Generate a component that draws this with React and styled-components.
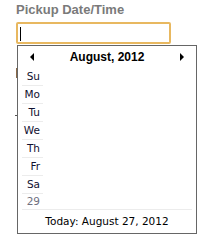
import React from "react";
import styled, { createGlobalStyle } from "styled-components";

const GlobalStyle = createGlobalStyle`
  body {
    margin: 0;
    background: #ffffff;
    font-family: "DejaVu Sans", Verdana, sans-serif;
  }
`;

const days = ["Su", "Mo", "Tu", "We", "Th", "Fr", "Sa"];

export default function App() {
  return (
    <>
      <GlobalStyle />
      <Page>
        <Label>Pickup Date/Time</Label>
        <Field>
          <FakeInput>
            <Caret />
          </FakeInput>

          <Popup>
            <Header>
              <Arrow dir="left" />
              <Title>August, 2012</Title>
              <Arrow dir="right" />
            </Header>
            <Grid>
              {days.map((d) => (
                <DayCell key={d}>{d}</DayCell>
              ))}
              <DayCell muted>29</DayCell>
            </Grid>
            <Footer>Today: August 27, 2012</Footer>
          </Popup>
        </Field>

        <HiddenLabel>
          <Stem />
        </HiddenLabel>
        <HiddenDash />
      </Page>
    </>
  );
}

const Page = styled.div`
  padding: 2px 0 0 16px;
  width: 216px;
  height: 249px;
  box-sizing: border-box;
  overflow: hidden;
`;

const Label = styled.div`
  font-family: "Liberation Sans", Arial, sans-serif;
  font-weight: bold;
  font-size: 13px;
  line-height: 16px;
  color: #7a7a7a;
`;

const Field = styled.div`
  position: relative;
  margin-top: 4px;
  z-index: 2;
`;

const FakeInput = styled.div`
  width: 155px;
  height: 22px;
  box-sizing: border-box;
  border: 2px solid #e8b860;
  border-radius: 2px;
  padding: 3px 0 0 2px;
`;

const Caret = styled.div`
  width: 1px;
  height: 14px;
  background: #000;
`;

const Popup = styled.div`
  position: absolute;
  top: 23px;
  left: 1px;
  width: 180px;
  height: 189px;
  box-sizing: border-box;
  border: 1px solid #666666;
  background: #ffffff;
  padding: 0 4px;
`;

const Header = styled.div`
  display: flex;
  align-items: center;
  justify-content: space-between;
  height: 22px;
  padding: 0 8px 0 8px;
`;

const Title = styled.div`
  font-family: "Liberation Sans", Arial, sans-serif;
  font-weight: bold;
  font-size: 12px;
  color: #000;
`;

const Arrow = styled.span`
  width: 0;
  height: 0;
  border-top: 4px solid transparent;
  border-bottom: 4px solid transparent;
  ${(p) =>
    p.dir === "left"
      ? "border-right: 4px solid #000;"
      : "border-left: 4px solid #000;"}
`;

const Grid = styled.div`
  display: flex;
  flex-direction: column;
  border-bottom: 1px solid #ececec;
`;

const DayCell = styled.div`
  width: 21px;
  height: ${(p) => (p.muted ? "15px" : "18px")};
  box-sizing: border-box;
  padding-right: 3px;
  text-align: right;
  font-size: 10.5px;
  line-height: ${(p) => (p.muted ? "15px" : "17px")};
  color: ${(p) => (p.muted ? "#707080" : "#101030")};
  border-bottom: ${(p) => (p.muted ? "none" : "1px solid #ececec")};
`;

const Footer = styled.div`
  text-align: center;
  font-size: 10.5px;
  line-height: 22px;
  color: #000;
`;

const HiddenLabel = styled.div`
  margin-top: 24px;
  width: 2px;
  height: 10px;
  overflow: hidden;
`;

const Stem = styled.div`
  width: 1px;
  height: 10px;
  background: #8a6a4a;
`;

const HiddenDash = styled.div`
  margin: 37px 0 0 -1px;
  width: 3px;
  height: 1px;
  background: #555;
`;
